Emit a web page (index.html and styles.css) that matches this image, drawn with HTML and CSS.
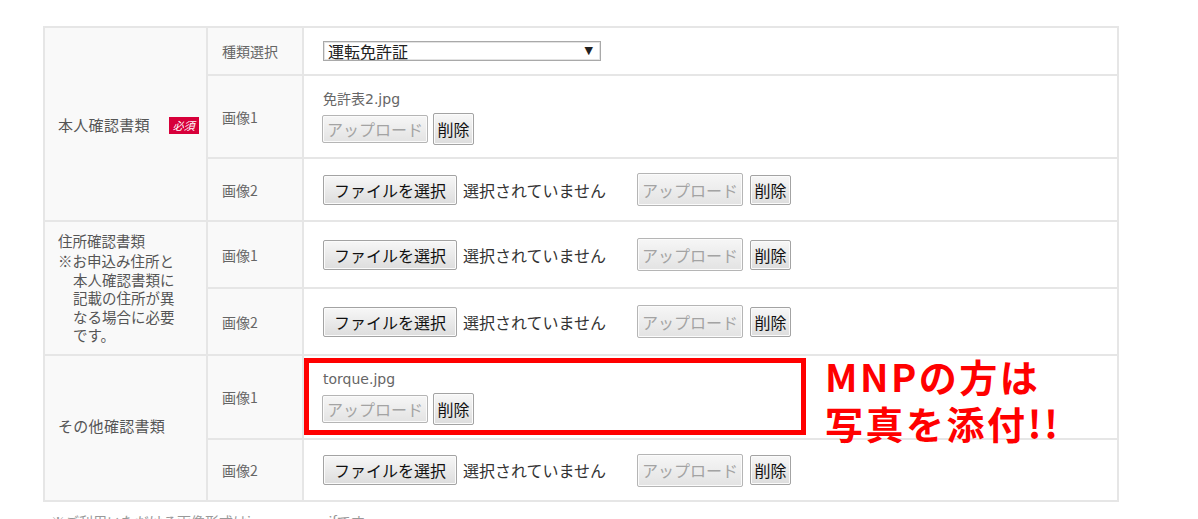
FILE: index.html
```html
<!DOCTYPE html>
<html lang="ja">
<head>
<meta charset="utf-8">
<title>確認書類アップロード</title>
<link rel="stylesheet" href="styles.css">
</head>
<body>
<div class="page">
  <table class="docs">
    <colgroup><col class="c1"><col class="c2"><col class="c3"></colgroup>
    <tr class="r48">
      <th rowspan="3" class="group"><span class="glabel">本人確認書類</span><span class="badge">必須</span></th>
      <th class="sub">種類選択</th>
      <td class="val">
        <div class="select"><span>運転免許証</span><span class="arrow">▼</span></div>
      </td>
    </tr>
    <tr class="r83">
      <th class="sub">画像1</th>
      <td class="val">
        <div class="fname">免許表2.jpg</div>
        <div class="btns"><button class="btn up" disabled>アップロード</button><button class="btn del tall">削除</button></div>
      </td>
    </tr>
    <tr class="r63">
      <th class="sub">画像2</th>
      <td class="val">
        <div class="filerow"><button class="btn file">ファイルを選択</button><span class="none">選択されていません</span><button class="btn up up2" disabled>アップロード</button><button class="btn del">削除</button></div>
      </td>
    </tr>
    <tr class="r67">
      <th rowspan="2" class="group">
        <div class="gtitle">住所確認書類</div>
        <div class="note">※お申込み住所と<br>本人確認書類に<br>記載の住所が異<br>なる場合に必要<br>です。</div>
      </th>
      <th class="sub">画像1</th>
      <td class="val">
        <div class="filerow"><button class="btn file">ファイルを選択</button><span class="none">選択されていません</span><button class="btn up up2" disabled>アップロード</button><button class="btn del">削除</button></div>
      </td>
    </tr>
    <tr class="r67">
      <th class="sub">画像2</th>
      <td class="val">
        <div class="filerow"><button class="btn file">ファイルを選択</button><span class="none">選択されていません</span><button class="btn up up2" disabled>アップロード</button><button class="btn del">削除</button></div>
      </td>
    </tr>
    <tr class="r84">
      <th rowspan="2" class="group"><span class="glabel lift">その他確認書類</span></th>
      <th class="sub">画像1</th>
      <td class="val">
        <div class="fname">torque.jpg</div>
        <div class="btns"><button class="btn up" disabled>アップロード</button><button class="btn del tall">削除</button></div>
      </td>
    </tr>
    <tr class="r62">
      <th class="sub">画像2</th>
      <td class="val">
        <div class="filerow"><button class="btn file">ファイルを選択</button><span class="none">選択されていません</span><button class="btn up up2" disabled>アップロード</button><button class="btn del">削除</button></div>
      </td>
    </tr>
  </table>
  <p class="after">※ご利用いただける画像形式はjpg・png・gifです。</p>
  <div class="redbox"></div>
  <div class="callout"><div>MNPの方は</div><div>写真を添付!!</div></div>
</div>
</body>
</html>
```
FILE: styles.css
```css
html, body { margin: 0; padding: 0; background: #fff; }
body {
  font-family: "DejaVu Sans", "Noto Sans CJK JP", sans-serif;
  color: #555;
  width: 1198px;
  height: 519px;
  overflow: hidden;
}
.page {
  position: relative;
  padding: 26px 0 0 43px;
}
.docs {
  border-collapse: collapse;
  table-layout: fixed;
  width: 1076px;
  border: 2px solid #e6e6e6;
}
.c1 { width: 163px; }
.c2 { width: 96px; }
.docs th, .docs td {
  border: 2px solid #e6e6e6;
  padding: 0;
  vertical-align: middle;
  text-align: left;
  font-weight: normal;
}
.r48 { height: 48px; }
.r83 { height: 83px; }
.r63 { height: 63px; }
.r67 { height: 67px; }
.r84 { height: 84px; }
.r62 { height: 62px; }
.group {
  background: #f9f9f9;
  padding-left: 13px !important;
  font-size: 14px;
  font-family: "Noto Sans CJK JP", sans-serif;
}
.sub {
  background: #f9f9f9;
  padding-left: 14px !important;
  font-size: 14px;
  font-family: "Noto Sans CJK JP", sans-serif;
  color: #666;
}
.glabel { font-size: 15px; letter-spacing: 0.3px; }
.glabel.lift { display: inline-block; margin-bottom: 6px; }
.badge {
  display: inline-block;
  vertical-align: 1px;
  margin-left: 19px;
  width: 30px;
  height: 17px;
  line-height: 17px;
  background: #d7003a;
  color: #fff;
  font-size: 11px;
  text-align: center;
  font-style: italic;
}
.gtitle { font-size: 14.5px; line-height: 20px; margin-bottom: 1px; }
.note {
  font-size: 14.5px;
  line-height: 18.6px;
  padding-left: 15px;
  text-indent: -15px;
}
.val { padding-left: 18px !important; background: #fff; }
.select {
  width: 265px;
  height: 18px;
  border: 1px solid #a9a9a9;
  box-shadow: inset 0 0 0 1px #e3e3e3;
  display: flex;
  justify-content: space-between;
  align-items: center;
  padding: 0 7px 0 4px;
  box-sizing: content-box;
  margin-left: 1px;
  font-family: "Noto Sans CJK JP", sans-serif;
  font-size: 16px;
  color: #222;
  line-height: 18px;
}
.select .arrow { font-size: 11px; color: #222; font-family: "DejaVu Sans", sans-serif; }
.fname { font-size: 14px; color: #666; line-height: 20px; margin-bottom: 4px; margin-left: 1px; }
.btns { display: flex; align-items: center; gap: 5px; }
.filerow { display: flex; align-items: center; }
.btn {
  font-family: "Noto Sans CJK JP", sans-serif;
  font-size: 16px;
  color: #111;
  background: linear-gradient(#f7f7f7, #dddddd);
  border: 1px solid #a3a3a3;
  border-radius: 2px;
  padding: 0;
  margin: 0;
  height: 30px;
  line-height: 26px;
  text-align: center;
  box-shadow: inset 0 0 0 1px #fbfbfb;
}
.btn.file { width: 134px; margin-left: 1px; }
.btn.up {
  width: 106px;
  height: 28px;
  color: #a3a3a3;
  border-color: #b5b5b5;
  background: linear-gradient(#f6f6f6, #e3e3e3);
}
.btn.up2 { height: 33px; margin-left: 31px; }
.btn.del { width: 41px; margin-left: 7px; }
.btns .btn.del { margin-left: 0; }
.btn.tall { height: 32px; }
.none { margin-left: 6px; font-family: "Noto Sans CJK JP", sans-serif; font-size: 16px; color: #333; }
.after {
  margin: 9px 0 0 8px;
  font-family: "Noto Sans CJK JP", sans-serif;
  font-size: 14px;
  color: #999;
}
.redbox {
  position: absolute;
  left: 304px;
  top: 358px;
  width: 492px;
  height: 67px;
  border: 5px solid #ff0000;
}
.callout {
  position: absolute;
  left: 825px;
  top: 352px;
  font-family: "Noto Sans CJK JP", sans-serif;
  font-weight: bold;
  font-size: 38px;
  line-height: 47px;
  color: #ff0000;
  letter-spacing: 2.5px;
}
```
